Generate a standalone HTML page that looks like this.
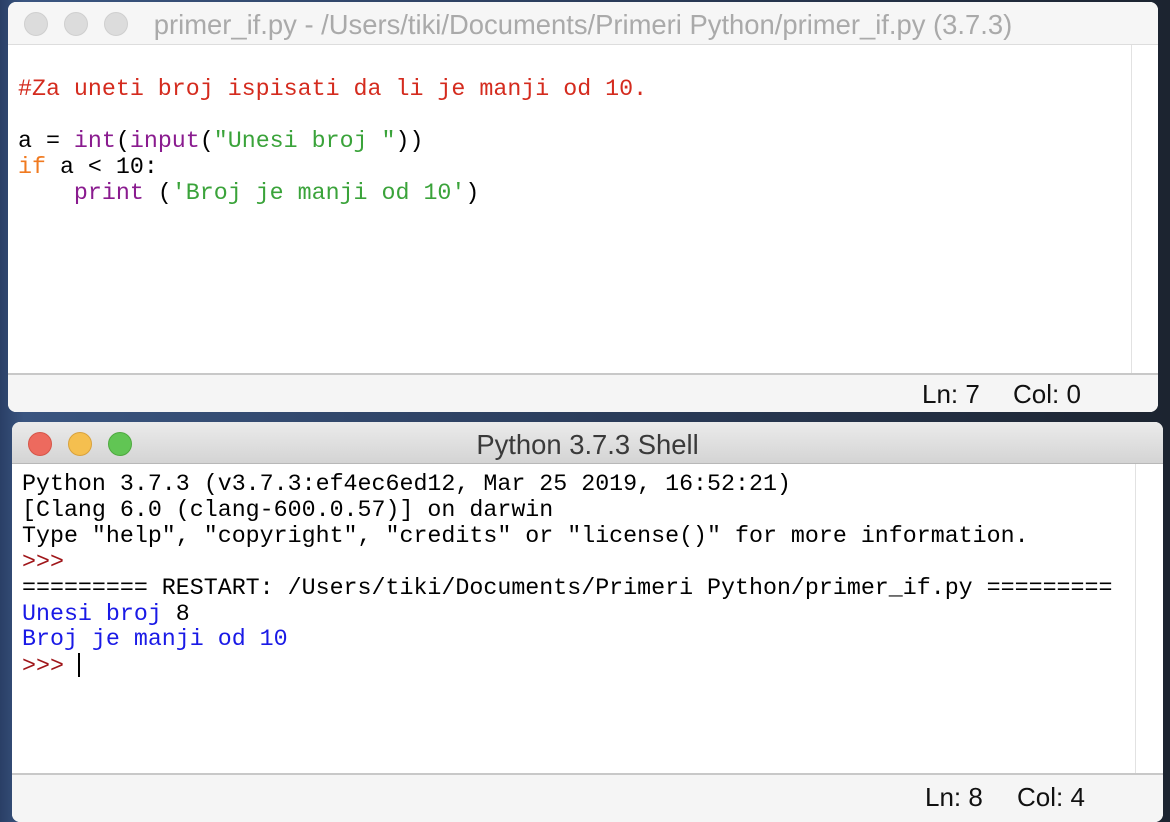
<!DOCTYPE html>
<html><head><meta charset="utf-8"><style>
*{margin:0;padding:0;box-sizing:border-box}
body{width:1170px;height:816px;overflow:hidden;position:relative;background:linear-gradient(90deg,#2a3f66 0%,#3a5580 2%,#2b3d5c 50%,#1c2430 100%);font-family:"Liberation Sans",sans-serif}
.win{position:absolute;background:#fff;border-radius:8px;overflow:hidden}
.tb{position:absolute;left:0;right:0;top:0;text-align:center;font-size:27.4px}
.dot{position:absolute;width:24px;height:24px;border-radius:50%}
.code{position:absolute;font-family:"Liberation Mono",monospace;font-size:23.3px;line-height:25.9px;white-space:pre;color:#000}
.sb{position:absolute;left:0;right:0;bottom:0;background:#f5f5f5;border-top:2px solid #c8c8c8;font-size:26px;color:#111}
.scr{position:absolute;top:0;width:1px;background:#e2e2e2}
</style></head><body>
<div class="win" style="left:8px;top:2px;width:1150px;height:410px">
 <div class="tb" style="height:43px;background:#f6f6f6;border-bottom:1px solid #ddd;color:#aaa;line-height:46px">primer_if.py - /Users/tiki/Documents/Primeri Python/primer_if.py (3.7.3)</div>
 <div class="dot" style="left:16px;top:10px;background:#dcdcdc;border:1px solid #cfcfcf"></div>
 <div class="dot" style="left:56px;top:10px;background:#dcdcdc;border:1px solid #cfcfcf"></div>
 <div class="dot" style="left:96px;top:10px;background:#dcdcdc;border:1px solid #cfcfcf"></div>
 <div class="scr" style="left:1123px;top:43px;height:328px"></div>
 <div class="code" style="left:10px;top:75px"><span style="color:#d42b1e">#Za uneti broj ispisati da li je manji od 10.</span>

a = <span style="color:#8a1b8f">int</span>(<span style="color:#8a1b8f">input</span>(<span style="color:#3aa33a">"Unesi broj "</span>))
<span style="color:#f07a20">if</span> a &lt; 10:
    <span style="color:#8a1b8f">print</span> (<span style="color:#3aa33a">'Broj je manji od 10'</span>)</div>
 <div class="sb" style="height:39px"><span style="position:absolute;left:914px;top:4px">Ln: 7</span><span style="position:absolute;left:1005px;top:4px">Col: 0</span></div>
</div>
<div class="win" style="left:12px;top:422px;width:1151px;height:400px">
 <div class="tb" style="height:42px;background:linear-gradient(#ebebeb,#d4d4d4);border-bottom:1px solid #b8b8b8;color:#3a3a3a;line-height:45px">Python 3.7.3 Shell</div>
 <div class="dot" style="left:16px;top:10px;background:#ed6a5e;border:1px solid #d65548"></div>
 <div class="dot" style="left:56px;top:10px;background:#f5bf4f;border:1px solid #d9a23c"></div>
 <div class="dot" style="left:96px;top:10px;background:#61c554;border:1px solid #4ea93f"></div>
 <div class="scr" style="left:1123px;top:42px;height:310px"></div>
 <div class="code" style="left:10px;top:50px">Python 3.7.3 (v3.7.3:ef4ec6ed12, Mar 25 2019, 16:52:21)
[Clang 6.0 (clang-600.0.57)] on darwin
Type "help", "copyright", "credits" or "license()" for more information.
<span style="color:#a0161a">&gt;&gt;&gt;</span>
========= RESTART: /Users/tiki/Documents/Primeri Python/primer_if.py =========
<span style="color:#1a1ae6">Unesi broj </span>8
<span style="color:#1a1ae6">Broj je manji od 10</span>
<span style="color:#a0161a">&gt;&gt;&gt;</span> <span style="display:inline-block;width:2px;height:24px;background:#000;vertical-align:-5px"></span></div>
 <div class="sb" style="top:351px;bottom:auto;height:60px"><span style="position:absolute;left:913px;top:7px">Ln: 8</span><span style="position:absolute;left:1005px;top:7px">Col: 4</span></div>
</div>
</body></html>
